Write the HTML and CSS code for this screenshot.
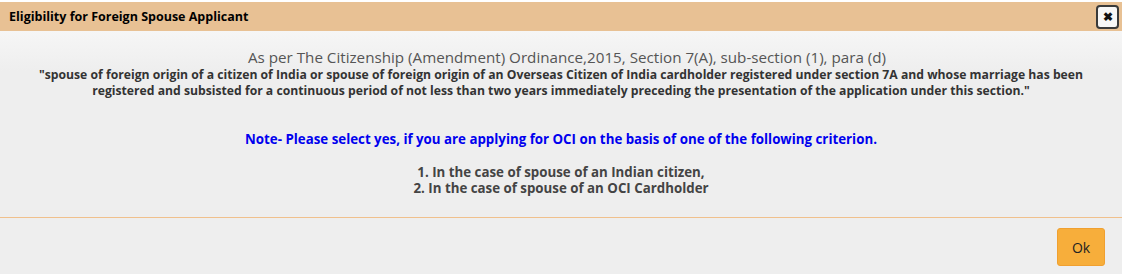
FILE: index.html
```html
<!DOCTYPE html>
<html lang="en">
<head>
    <meta charset="UTF-8">
    <title>Eligibility for Foreign Spouse Applicant</title>
    <link rel="stylesheet" href="styles.css">
</head>
<body>
    <div class="modal">
        <div class="modal-header">
            <h4 class="modal-title">Eligibility for Foreign Spouse Applicant</h4>
            <button type="button" class="close">&#10006;</button>
        </div>
        <div class="modal-body">
            <p class="section-ref">As per The Citizenship (Amendment) Ordinance,2015, Section 7(A), sub-section (1), para (d)</p>
            <p class="quote">"spouse of foreign origin of a citizen of India or spouse of foreign origin of an Overseas Citizen of India cardholder registered under section 7A and whose marriage has been registered and subsisted for a continuous period of not less than two years immediately preceding the presentation of the application under this section."</p>
            <p class="note">Note- Please select yes, if you are applying for OCI on the basis of one of the following criterion.</p>
            <p class="criteria">1. In the case of spouse of an Indian citizen,<br>2. In the case of spouse of an OCI Cardholder</p>
        </div>
        <div class="modal-footer">
            <button type="button" class="btn-ok">Ok</button>
        </div>
    </div>
</body>
</html>
```

FILE: styles.css
```css
body {
    margin: 0;
    padding: 0;
    font-family: 'Open Sans', 'Noto Sans', Arial, sans-serif;
    background-color: #eeeeee;
    color: #333;
}
.modal {
    padding-top: 2px;
    background: #fff;
}
.modal-header {
    display: flex;
    align-items: center;
    justify-content: space-between;
    height: 29px;
    padding: 0 3px 0 9px;
    background-color: #e8c194;
}
.modal-title {
    margin: 0;
    font-size: 12.5px;
    font-weight: bold;
    color: #000;
}
.close {
    width: 23px;
    height: 24px;
    padding: 0;
    border: 2px solid #3a3a3a;
    border-radius: 4px;
    background: #f7f7f7;
    font-size: 12px;
    font-weight: bold;
    line-height: 20px;
    color: #111;
    cursor: pointer;
}
.modal-body {
    padding: 16px 20px 21px;
    text-align: center;
    background: linear-gradient(#f6f6f6, #eeeeee 40px);
    border-bottom: 1px solid #f0c08c;
}
.modal-body p {
    margin: 0;
}
.section-ref {
    padding-left: 12px;
    font-size: 15.2px;
    line-height: 20px;
    color: #555;
}
.quote {
    padding: 0 16px;
    font-size: 12.2px;
    font-weight: bold;
    line-height: 16px;
    color: #333;
}
.modal-body .note {
    margin-top: 32px;
    font-size: 13.3px;
    font-weight: bold;
    line-height: 16px;
    color: #0000ee;
}
.modal-body .criteria {
    margin-top: 17px;
    font-size: 13.3px;
    font-weight: bold;
    line-height: 16px;
    color: #444;
}
.modal-footer {
    display: flex;
    justify-content: flex-end;
    padding: 10px 17px 8px;
    background-color: #eeeeee;
}
.btn-ok {
    width: 48px;
    height: 38px;
    border: 1px solid #f0a030;
    border-radius: 3px;
    background-color: #f7ae3b;
    font-family: 'Open Sans', Arial, sans-serif;
    font-size: 14px;
    color: #222;
    cursor: pointer;
}
```
